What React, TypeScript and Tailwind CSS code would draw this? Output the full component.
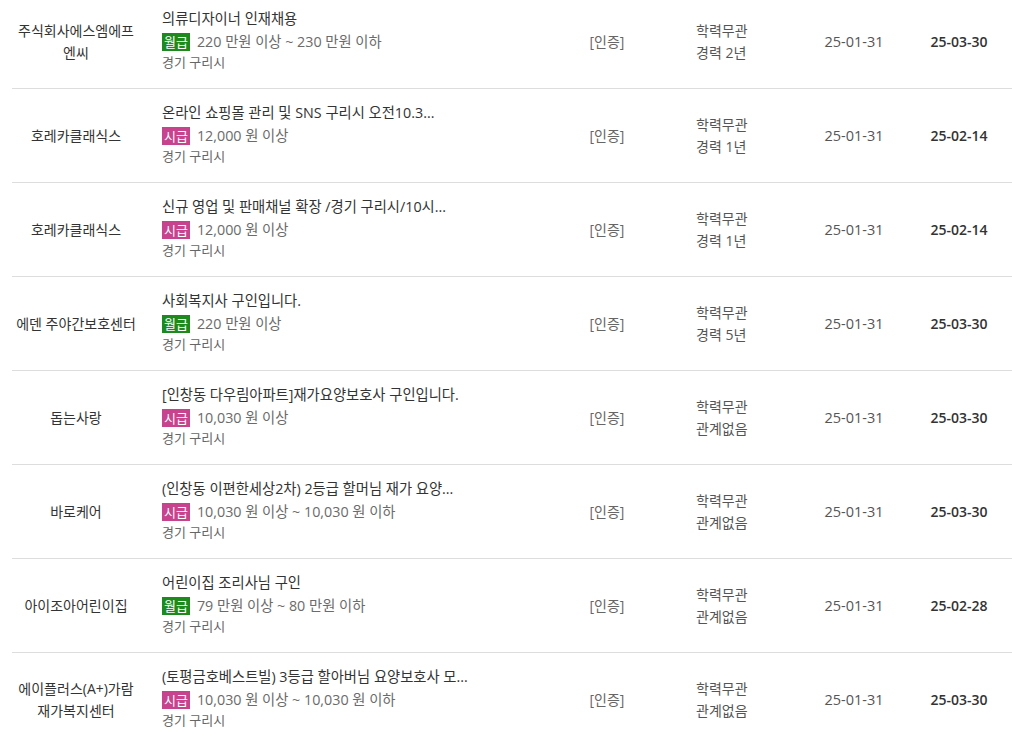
import React from "react";

type Row = {
  company: string[];
  title: string;
  pay: "월급" | "시급";
  salary: string;
  location: string;
  edu: string;
  career: string;
  reg: string;
  due: string;
};

const rows: Row[] = [
  { company: ["주식회사에스엠에프", "엔씨"], title: "의류디자이너 인재채용", pay: "월급", salary: "220 만원 이상 ~ 230 만원 이하", location: "경기 구리시", edu: "학력무관", career: "경력 2년", reg: "25-01-31", due: "25-03-30" },
  { company: ["호레카클래식스"], title: "온라인 쇼핑몰 관리 및 SNS 구리시 오전10.3...", pay: "시급", salary: "12,000 원 이상", location: "경기 구리시", edu: "학력무관", career: "경력 1년", reg: "25-01-31", due: "25-02-14" },
  { company: ["호레카클래식스"], title: "신규 영업 및 판매채널 확장 /경기 구리시/10시...", pay: "시급", salary: "12,000 원 이상", location: "경기 구리시", edu: "학력무관", career: "경력 1년", reg: "25-01-31", due: "25-02-14" },
  { company: ["에덴 주야간보호센터"], title: "사회복지사 구인입니다.", pay: "월급", salary: "220 만원 이상", location: "경기 구리시", edu: "학력무관", career: "경력 5년", reg: "25-01-31", due: "25-03-30" },
  { company: ["돕는사랑"], title: "[인창동 다우림아파트]재가요양보호사 구인입니다.", pay: "시급", salary: "10,030 원 이상", location: "경기 구리시", edu: "학력무관", career: "관계없음", reg: "25-01-31", due: "25-03-30" },
  { company: ["바로케어"], title: "(인창동 이편한세상2차) 2등급 할머님 재가 요양...", pay: "시급", salary: "10,030 원 이상 ~ 10,030 원 이하", location: "경기 구리시", edu: "학력무관", career: "관계없음", reg: "25-01-31", due: "25-03-30" },
  { company: ["아이조아어린이집"], title: "어린이집 조리사님 구인", pay: "월급", salary: "79 만원 이상 ~ 80 만원 이하", location: "경기 구리시", edu: "학력무관", career: "관계없음", reg: "25-01-31", due: "25-02-28" },
  { company: ["에이플러스(A+)가람", "재가복지센터"], title: "(토평금호베스트빌) 3등급 할아버님 요양보호사 모...", pay: "시급", salary: "10,030 원 이상 ~ 10,030 원 이하", location: "경기 구리시", edu: "학력무관", career: "관계없음", reg: "25-01-31", due: "25-03-30" },
];

export default function App() {
  return (
    <div
      className="w-[1012px] h-[736px] overflow-hidden bg-white"
      style={{ fontFamily: '"Open Sans", "Noto Sans CJK KR", sans-serif' }}
    >
      <div className="mt-[-5px] pl-[12px]">
        {rows.map((r, i) => (
          <div key={i} className="flex h-[94px] items-center border-b border-[#dddddd]">
            <div className="w-[128px] text-center text-[14px] leading-[22px] text-[#333333]">
              {r.company.map((c, j) => (
                <div key={j}>{c}</div>
              ))}
            </div>
            <div className="ml-[22px] mb-[6px] w-[400px] flex flex-col">
              <div className="h-[22px] text-[14.3px] leading-[22px] text-[#333333] whitespace-nowrap">{r.title}</div>
              <div className="h-[24px] flex items-center text-[14.3px] text-[#6b6b6b] whitespace-nowrap">
                <span
                  className={`inline-flex h-[18px] items-center px-[2px] text-[13px] leading-[18px] text-white ${
                    r.pay === "월급" ? "bg-[#1d8a1d]" : "bg-[#c8438d]"
                  }`}
                >
                  {r.pay}
                </span>
                <span className="ml-[7px]">{r.salary}</span>
              </div>
              <div className="h-[16px] text-[13px] leading-[16px] text-[#666666]">{r.location}</div>
            </div>
            <div className="w-[90px] text-center text-[14px] text-[#666666]">[인증]</div>
            <div className="w-[148px] pl-[44px] text-[14px] leading-[22px] text-[#555555]">
              <div>{r.edu}</div>
              <div>{r.career}</div>
            </div>
            <div className="w-[108px] text-center text-[14.5px] text-[#555555]">{r.reg}</div>
            <div className="w-[102px] text-center text-[14px] font-semibold text-[#333333]">{r.due}</div>
          </div>
        ))}
      </div>
    </div>
  );
}
